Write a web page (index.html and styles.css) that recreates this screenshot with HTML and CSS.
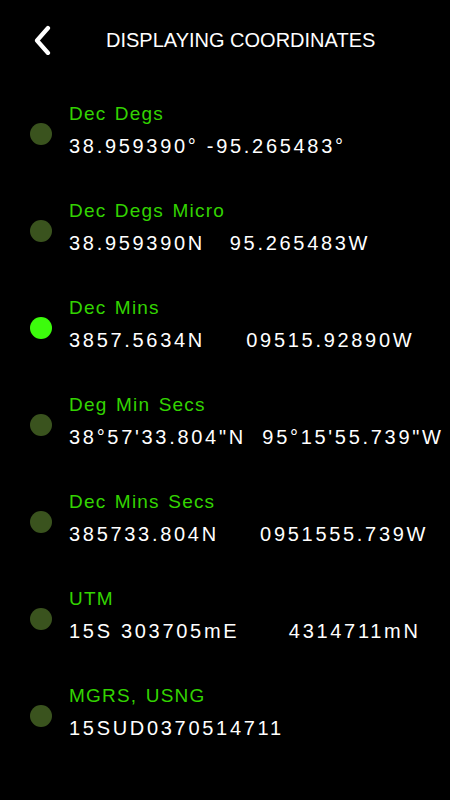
FILE: index.html
```html
<!DOCTYPE html>
<html>
<head>
<meta charset="utf-8"/>
<title>Displaying Coordinates</title>
<link rel="stylesheet" href="styles.css">
</head>
<body>
<div class="header">
  <span class="back">
    <svg width="18" height="30" viewBox="0 0 18 30"><path d="M15 3 L4 15.5 L15 28" fill="none" stroke="#fff" stroke-width="4.2" stroke-linecap="round" stroke-linejoin="round"/></svg>
  </span>
  <h1 class="title">DISPLAYING COORDINATES</h1>
</div>

<ul class="formats">
  <li class="format">
    <span class="dot"></span>
    <div class="text">
      <div class="label">Dec Degs</div>
      <div class="value">38.959390° -95.265483°</div>
    </div>
  </li>
  <li class="format">
    <span class="dot"></span>
    <div class="text">
      <div class="label">Dec Degs Micro</div>
      <div class="value">38.959390N   95.265483W</div>
    </div>
  </li>
  <li class="format selected">
    <span class="dot"></span>
    <div class="text">
      <div class="label">Dec Mins</div>
      <div class="value">3857.5634N     09515.92890W</div>
    </div>
  </li>
  <li class="format">
    <span class="dot"></span>
    <div class="text">
      <div class="label">Deg Min Secs</div>
      <div class="value">38°57'33.804"N  95°15'55.739"W</div>
    </div>
  </li>
  <li class="format">
    <span class="dot"></span>
    <div class="text">
      <div class="label">Dec Mins Secs</div>
      <div class="value">385733.804N     0951555.739W</div>
    </div>
  </li>
  <li class="format">
    <span class="dot"></span>
    <div class="text">
      <div class="label">UTM</div>
      <div class="value">15S 303705mE      4314711mN</div>
    </div>
  </li>
  <li class="format">
    <span class="dot"></span>
    <div class="text">
      <div class="label">MGRS, USNG</div>
      <div class="value">15SUD0370514711</div>
    </div>
  </li>
</ul>
</body>
</html>
```

FILE: styles.css
```css
body {
  margin: 0;
  background-color: #000;
  color: #fff;
  font-family: "Liberation Sans", Arial, sans-serif;
  width: 450px;
  height: 800px;
  overflow: hidden;
}

.header {
  display: flex;
  align-items: center;
  height: 80px;
  padding-left: 33px;
}

.back {
  display: flex;
  width: 18px;
  height: 30px;
}

.title {
  margin: 0 0 0 55px;
  font-size: 20px;
  font-weight: normal;
  line-height: 1;
}

.formats {
  list-style: none;
  margin: 0;
  padding: 1px 0 0 0;
}

.format {
  display: flex;
  align-items: center;
  height: 97px;
  padding-left: 30px;
}

.dot {
  width: 22px;
  height: 22px;
  border-radius: 50%;
  background-color: #3a531e;
  margin-top: 8px;
}

.selected .dot {
  background-color: #3cfc0c;
}

.text {
  margin-left: 17px;
}

.label {
  color: #33d400;
  font-size: 19px;
  letter-spacing: 1.2px;
  word-spacing: 2px;
  line-height: 32px;
}

.value {
  font-size: 20px;
  letter-spacing: 2.7px;
  line-height: 32px;
  white-space: pre;
}
```
